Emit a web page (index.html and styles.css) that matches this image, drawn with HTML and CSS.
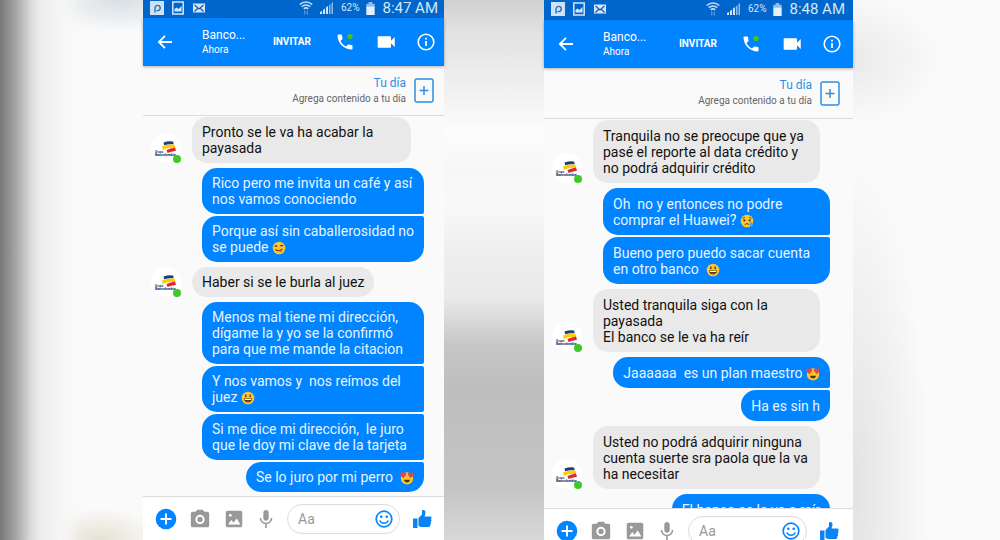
FILE: index.html
```
<!DOCTYPE html>
<html lang="es">
<head>
    <meta charset="utf-8">
    <meta name="viewport" content="width=device-width, initial-scale=1">
    <title>Conversación</title>
    <link rel="stylesheet" href="styles.css">
</head>
<body>

<!-- Shared icons -->
<svg class="sprite" aria-hidden="true">
    <symbol id="i-app" viewBox="0 0 14 14">
        <path fill="#cfe2f7" d="M0 0h14v14H0z"/>
        <path fill="none" stroke="#2f6fb5" stroke-width="1.4" d="M5 11.5V7a2.6 2.6 0 1 1 2.6 2.6H6.4"/>
    </symbol>
    <symbol id="i-shot" viewBox="0 0 14 14">
        <path fill="none" stroke="#d5e6f8" stroke-width="1.5" d="M1.8 1h10.4v12H1.8z"/>
        <path fill="#d5e6f8" d="M3.5 10.5V8l2-1.5 2 1.5 3-3v5.5z"/>
    </symbol>
    <symbol id="i-mail" viewBox="0 0 14 14">
        <path fill="#d5e6f8" d="M1 2.5h12v9H1z"/>
        <path fill="none" stroke="#0a5cb5" stroke-width="1.2" d="M2.5 4L7 8l4.5-4M2.5 10.5l3-3M11.5 10.5l-3-3"/>
    </symbol>
    <symbol id="i-wifi" viewBox="0 0 14 14">
        <path fill="none" stroke="#c4dcf5" stroke-width="1.5" d="M.8 3.6a9 9 0 0 1 12.4 0M2.8 5.8a6 6 0 0 1 8.4 0M4.8 7.9a3.2 3.2 0 0 1 4.4 0"/>
        <path fill="none" stroke="#6fa9e2" d="M5.8 9.5v4M8.2 9.5v4"/>
    </symbol>
    <symbol id="i-signal" viewBox="0 0 14 14">
        <path fill="#d5e6f8" d="M0 13v-2l2-1v3zM3 13V9l2-1.5V13zM6 13V6.5L8 5v8z"/>
        <path fill="#8fbbe8" d="M9 13V4.2l1.5-1V13zM11.500 13V2l1.5-1v12z"/>
    </symbol>
    <symbol id="i-battery" viewBox="0 0 9 14">
        <path fill="#8fbbe8" d="M2.5 0h4v2H9v4H0V2h2.5z"/>
        <path fill="#e3effb" d="M0 5h9v9H0z"/>
    </symbol>
    <symbol id="i-back" viewBox="0 0 16 16">
        <path fill="none" stroke="#fff" stroke-width="1.8" d="M15 8H2M8 1.800L1.800 8 8 14.200"/>
    </symbol>
    <symbol id="i-phone" viewBox="0 0 24 24">
        <path fill="#fff" d="M6.62 10.79c1.44 2.83 3.76 5.14 6.59 6.59l2.2-2.2c.27-.27.67-.36 1.02-.24 1.12.37 2.33.57 3.57.57.55 0 1 .45 1 1V20c0 .55-.45 1-1 1C10.61 21 3 13.39 3 4c0-.55.45-1 1-1h3.5c.55 0 1 .45 1 1 0 1.25.2 2.45.57 3.57.11.35.03.74-.25 1.02z"/>
        <circle cx="18" cy="5.500" r="3.200" fill="#42c716"/>
    </symbol>
    <symbol id="i-video" viewBox="0 0 24 24">
        <path fill="#fff" d="M18 10.5V6c0-.55-.45-1-1-1H3c-.55 0-1 .45-1 1v12c0 .55.45 1 1 1h14c.55 0 1-.45 1-1v-4.5l4.5 4.5V6z"/>
    </symbol>
    <symbol id="i-info" viewBox="0 0 18 18">
        <circle cx="9" cy="9" r="7.8" fill="none" stroke="#fff" stroke-width="1.6"/>
        <path stroke="#fff" stroke-width="1.8" d="M9 8v5M9 4.800v1.800"/>
    </symbol>
    <symbol id="i-plus" viewBox="0 0 22 22">
        <circle cx="11" cy="11" r="10.3" fill="#0084ff"/>
        <path stroke="#fff" stroke-width="1.900" d="M11 5.500v11M5.500 11h11"/>
    </symbol>
    <symbol id="i-camera" viewBox="0 0 24 24">
        <path fill="#999" d="M9 2L7.200 4H4c-1.100 0-2 .9-2 2v13c0 1.100.9 2 2 2h16c1.100 0 2-.9 2-2V6c0-1.100-.9-2-2-2h-3.200L15 2z"/>
        <circle cx="12" cy="12.500" r="4" fill="none" stroke="#fff" stroke-width="2.200"/>
    </symbol>
    <symbol id="i-image" viewBox="0 0 24 24">
        <path fill="#999" d="M21 19V5c0-1.100-.9-2-2-2H5c-1.100 0-2 .9-2 2v14c0 1.100.9 2 2 2h14c1.100 0 2-.9 2-2z"/>
        <path fill="#fff" d="M5.500 18l3.500-5 2.500 3 3.500-4.500 4 6.500z"/>
        <circle cx="8" cy="8" r="1.500" fill="#fff"/>
    </symbol>
    <symbol id="i-mic" viewBox="3 2 18 20">
        <path fill="#999" d="M12 14c1.660 0 3-1.340 3-3V5c0-1.660-1.340-3-3-3S9 3.340 9 5v6c0 1.660 1.340 3 3 3z"/>
        <path fill="none" stroke="#999" stroke-width="1.800" d="M5.800 11c0 3.500 2.900 6 6.200 6s6.200-2.500 6.200-6M12 17v5"/>
    </symbol>
    <symbol id="i-smile" viewBox="0 0 18 18">
        <circle cx="9" cy="9" r="7.800" fill="none" stroke="#0084ff" stroke-width="1.700"/>
        <circle cx="6.300" cy="6.800" r="1.300" fill="#0084ff"/>
        <circle cx="11.700" cy="6.800" r="1.300" fill="#0084ff"/>
        <path fill="none" stroke="#0084ff" stroke-width="1.500" d="M4.800 10.500c1.500 3.600 6.900 3.600 8.400 0"/>
    </symbol>
    <symbol id="i-like" viewBox="0 0 20 20">
        <path fill="#0a84f5" d="M1 9.500h4.500V19H2c-.6 0-1-.4-1-1zM6.500 9L10 5.500V2c0-1.500 3.500-1.500 3.500 1.500 0 1.600-.5 2.500-1 4H18c2 0 2 2.200.9 2.800.9.700.8 2-.2 2.600.7.800.5 2-.5 2.500.4 1.300-.3 2.600-1.900 2.600H10c-1.500 0-2.300-.5-3.500-1z"/>
    </symbol>
    <symbol id="i-story" viewBox="0 0 20 25">
        <rect x="1" y="1" width="18" height="23" rx="2" fill="none" stroke="#2f8de4" stroke-width="1.500"/>
        <path stroke="#2f8de4" stroke-width="1.500" d="M10 8v9M5.500 12.500h9"/>
    </symbol>
    <symbol id="i-bank" viewBox="0 0 30 30">
        <circle cx="15" cy="15" r="15" fill="#fff"/>
        <path fill="#1d3f7d" d="M12.500 9.500q5-1.800 9.500-1l.8 2.800q-5-.6-9.600 1z"/>
        <path fill="#fc0" d="M11 13.500q6-2.800 12.500-1.800l.8 3.200q-6.500-.8-12.500 2z"/>
        <path fill="#e3262b" d="M15.500 17q4-1.800 8.500-2.500l1 3.300q-4.500.7-8.500 2.300z"/>
        <text x="4" y="19.500" font-size="3" font-weight="700" fill="#2b4a75">Grupo</text>
        <text x="4" y="22.800" font-size="3.500" font-weight="900" fill="#1d3f7d">Bancolombia</text>
    </symbol>
    <symbol id="e-grin" viewBox="0 0 16 16">
        <circle cx="8" cy="8" r="7.200" fill="#fdc72f"/>
        <path fill="#5b3213" d="M4.800 4h1.500v3H4.800zM9.700 4h1.500v3H9.700zM3.200 8.500h9.600c-.5 6-9.100 6-9.600 0z"/>
        <path fill="#fff" d="M4 9h8l-.5 1.300h-7z"/>
        <path fill="#e8453c" d="M5.800 12.300q2.200-1.600 4.400 0-2.200 1.200-4.400 0z"/>
    </symbol>
    <symbol id="e-yum" viewBox="0 0 16 16">
        <circle cx="8" cy="8" r="7.200" fill="#fdc72f"/>
        <path fill="none" stroke="#5b3213" stroke-width="1.200" d="M3 6.500q1.500-2 3 0M9.500 6q1.500-2 3.200 0M4 9.500q3 3.500 8-.5"/>
        <path fill="#e8453c" d="M7.500 10.500l3.500-1c2 2.500-1.800 5-3.500 1z"/>
    </symbol>
    <symbol id="e-love" viewBox="0 0 16 16">
        <circle cx="8" cy="8.500" r="7" fill="#fdc72f"/>
        <path fill="#ee3f42" d="M3.800 8.200L.3 4.500C-.5 1.500 3 .8 3.800 2.500 5.500.5 8 2.500 6.800 4.700zM12.200 8.200L9.200 4.700C8 2.500 10.500.5 12.200 2.500 13 .8 16.500 1.500 15.700 4.500z"/>
        <path fill="#5b3213" d="M4.500 10h7c-.8 4-6.200 4-7 0z"/>
    </symbol>
    <symbol id="e-cry" viewBox="0 0 16 16">
        <circle cx="8" cy="8" r="7.200" fill="#fdc72f"/>
        <path fill="none" stroke="#5b3213" stroke-width="1.100" d="M3 5l2.500-1.200M10.500 3.800L13 5M5.500 12q2.500-2.200 5 0"/>
        <circle cx="5" cy="7.300" r="1.200" fill="#5b3213"/>
        <circle cx="11" cy="7.300" r="1.200" fill="#5b3213"/>
        <path fill="#45a9ea" d="M12.500 8.500c3 3 3 5.500.5 5.700-2.500-.2-2.500-2.700-.5-5.700z"/>
    </symbol>
</svg>

<main class="stage">
    <section class="phone">
        <div class="status">
            <svg class="status-icon"><use href="#i-app"/></svg>
            <svg class="status-icon"><use href="#i-shot"/></svg>
            <svg class="status-icon"><use href="#i-mail"/></svg>
            <svg class="status-icon wifi"><use href="#i-wifi"/></svg>
            <svg class="status-icon"><use href="#i-signal"/></svg>
            <span class="charge">62%</span>
            <svg class="battery"><use href="#i-battery"/></svg>
            <span class="clock">8:47 AM</span>
        </div>
        <header class="topbar">
            <button class="back" aria-label="Volver"><svg><use href="#i-back"/></svg></button>
            <div class="contact">
                <div class="name">Banco...</div>
                <div class="seen">Ahora</div>
            </div>
            <button class="invite">INVITAR</button>
            <button class="call" aria-label="Llamar"><svg><use href="#i-phone"/></svg></button>
            <button class="call" aria-label="Videollamada"><svg><use href="#i-video"/></svg></button>
            <button class="info" aria-label="Información"><svg><use href="#i-info"/></svg></button>
        </header>
        <div class="story">
            <div class="story-text">
                <div class="story-title">Tu día</div>
                <div>Agrega contenido a tu día</div>
            </div>
            <button class="story-add" aria-label="Agregar a tu día"><svg><use href="#i-story"/></svg></button>
        </div>
        <div class="chat">
            <div class="received">
                <div class="avatar"><svg><use href="#i-bank"/></svg></div>
                <p class="bubble">Pronto se le va ha acabar la payasada</p>
            </div>
            <div class="sent">
                <p class="bubble">Rico pero me invita un café y así nos vamos conociendo</p>
                <p class="bubble">Porque así sin caballerosidad no se puede <svg class="emoji"><use href="#e-yum"/></svg></p>
            </div>
            <div class="received">
                <div class="avatar"><svg><use href="#i-bank"/></svg></div>
                <p class="bubble">Haber si se le burla al juez</p>
            </div>
            <div class="sent">
                <p class="bubble">Menos mal tiene mi dirección, dígame la y yo se la confirmó para que me mande la citacion</p>
                <p class="bubble">Y nos vamos y &nbsp;nos reímos del juez <svg class="emoji"><use href="#e-grin"/></svg></p>
                <p class="bubble">Si me dice mi dirección, &nbsp;le juro que le doy mi clave de la tarjeta</p>
                <p class="bubble">Se lo juro por mi perro &nbsp;<svg class="emoji"><use href="#e-love"/></svg></p>
            </div>
        </div>
        <form class="composer">
            <button type="button" class="add" aria-label="Más"><svg><use href="#i-plus"/></svg></button>
            <button type="button" class="tool" aria-label="Cámara"><svg><use href="#i-camera"/></svg></button>
            <button type="button" class="tool" aria-label="Galería"><svg><use href="#i-image"/></svg></button>
            <button type="button" class="mic" aria-label="Micrófono"><svg><use href="#i-mic"/></svg></button>
            <div class="field">
                <input type="text" placeholder="Aa" aria-label="Mensaje">
                <button type="button" class="smile" aria-label="Emoji"><svg><use href="#i-smile"/></svg></button>
            </div>
            <button type="button" class="like" aria-label="Me gusta"><svg><use href="#i-like"/></svg></button>
        </form>
    </section>

    <section class="phone large">
        <div class="status">
            <svg class="status-icon"><use href="#i-app"/></svg>
            <svg class="status-icon"><use href="#i-shot"/></svg>
            <svg class="status-icon"><use href="#i-mail"/></svg>
            <svg class="status-icon wifi"><use href="#i-wifi"/></svg>
            <svg class="status-icon"><use href="#i-signal"/></svg>
            <span class="charge">62%</span>
            <svg class="battery"><use href="#i-battery"/></svg>
            <span class="clock">8:48 AM</span>
        </div>
        <header class="topbar">
            <button class="back" aria-label="Volver"><svg><use href="#i-back"/></svg></button>
            <div class="contact">
                <div class="name">Banco...</div>
                <div class="seen">Ahora</div>
            </div>
            <button class="invite">INVITAR</button>
            <button class="call" aria-label="Llamar"><svg><use href="#i-phone"/></svg></button>
            <button class="call" aria-label="Videollamada"><svg><use href="#i-video"/></svg></button>
            <button class="info" aria-label="Información"><svg><use href="#i-info"/></svg></button>
        </header>
        <div class="story">
            <div class="story-text">
                <div class="story-title">Tu día</div>
                <div>Agrega contenido a tu día</div>
            </div>
            <button class="story-add" aria-label="Agregar a tu día"><svg><use href="#i-story"/></svg></button>
        </div>
        <div class="chat">
            <div class="received">
                <div class="avatar"><svg><use href="#i-bank"/></svg></div>
                <p class="bubble">Tranquila no se preocupe que ya pasé el reporte al data crédito y no podrá adquirir crédito</p>
            </div>
            <div class="sent">
                <p class="bubble">Oh &nbsp;no y entonces no podre comprar el Huawei? <svg class="emoji"><use href="#e-cry"/></svg></p>
                <p class="bubble">Bueno pero puedo sacar cuenta en otro banco &nbsp;<svg class="emoji"><use href="#e-grin"/></svg></p>
            </div>
            <div class="received">
                <div class="avatar"><svg><use href="#i-bank"/></svg></div>
                <p class="bubble">Usted tranquila siga con la payasada<br>El banco se le va ha reír</p>
            </div>
            <div class="sent">
                <p class="bubble">Jaaaaaa &nbsp;es un plan maestro <svg class="emoji"><use href="#e-love"/></svg></p>
                <p class="bubble">Ha es sin h</p>
            </div>
            <div class="received">
                <div class="avatar"><svg><use href="#i-bank"/></svg></div>
                <p class="bubble">Usted no podrá adquirir ninguna cuenta suerte sra paola que la va ha necesitar</p>
            </div>
            <div class="sent">
                <p class="bubble">El banco se le va a reír</p>
            </div>
        </div>
        <form class="composer">
            <button type="button" class="add" aria-label="Más"><svg><use href="#i-plus"/></svg></button>
            <button type="button" class="tool" aria-label="Cámara"><svg><use href="#i-camera"/></svg></button>
            <button type="button" class="tool" aria-label="Galería"><svg><use href="#i-image"/></svg></button>
            <button type="button" class="mic" aria-label="Micrófono"><svg><use href="#i-mic"/></svg></button>
            <div class="field">
                <input type="text" placeholder="Aa" aria-label="Mensaje">
                <button type="button" class="smile" aria-label="Emoji"><svg><use href="#i-smile"/></svg></button>
            </div>
            <button type="button" class="like" aria-label="Me gusta"><svg><use href="#i-like"/></svg></button>
        </form>
    </section>
</main>
</body>
</html>
```
FILE: styles.css
```
:root {
    --blue: #0084ff;
    --status-blue: #0066cc;
    --grey-bubble: #e9e9e9;
    --line: #dcdcdc;
}

* {
    box-sizing: border-box;
}

body {
    margin: 0;
    height: 100vh;
    overflow: hidden;
    font-family: Roboto, "Liberation Sans", sans-serif;
    font-size: 14px;
    line-height: 16px;
}

button {
    flex: none;
    padding: 0;
    border: 0;
    background: none;
    font: inherit;
    color: inherit;
    cursor: pointer;
}

svg {
    display: block;
    width: 100%;
    height: 100%;
}

.sprite {
    display: none;
}

/* Blurred backdrop with the two phones in front */
.stage {
    display: grid;
    grid-template-columns: minmax(0, 301fr) minmax(0, 309fr);
    column-gap: 10vw;
    align-items: start;
    height: 100vh;
    padding: 0 14.7vw 0 14.3vw;
    background:
        linear-gradient(90deg, #777 0, #949494 1%, #b4b4b4 2%, #d8d8d8 3%, #ececec 4%, #f6f6f6 6%, transparent 8%) no-repeat,
        linear-gradient(#d0d0d0 0, #e2e2e2 6%, #eee 15%, #fcfcfc 24%, #f7f7f7 32%, #f9f9f9 38%, #eee 47%, #eaeaea 55%, #c6c6c6 64%, #bebebe 72%, #c4c4c4 90%, #d8d8d8 100%) 49.3% 0 / 12% 100% no-repeat,
        radial-gradient(9% 12% at 85% 11%, #e9e9e9, transparent) no-repeat,
        radial-gradient(8% 60% at 85% 90%, #e2e2e2, transparent) no-repeat,
        radial-gradient(8% 6% at 12% 0, #d8dfe4, transparent) no-repeat,
        radial-gradient(6% 6% at 10% 100%, #e5e1d3, transparent) no-repeat,
        #fafafa;
}

.phone {
    display: flex;
    flex-direction: column;
    height: 100vh;
    background: #fafafa;
}

/* Status bar */
.status {
    display: flex;
    align-items: center;
    gap: 7px;
    height: 18px;
    padding: 0 6px 2px 7px;
    background: var(--status-blue);
    color: #d5e6f8;
}

.status-icon {
    flex: none;
    width: 14px;
    height: 14px;
}

.wifi {
    margin-left: auto;
}

.battery {
    flex: none;
    width: 9px;
    height: 13px;
}

.charge {
    font-size: 10px;
}

.clock {
    font-size: 15px;
}

/* Contact bar */
.topbar {
    display: flex;
    align-items: center;
    height: 48px;
    padding: 0 9px 0 14px;
    background: var(--blue);
    color: #fff;
    box-shadow: 0 1px 3px rgba(0, 0, 0, 0.3);
}

.back {
    width: 16px;
    height: 16px;
}

.contact {
    flex: 1;
    margin-left: 29px;
}

.name {
    font-size: 12px;
}

.seen {
    font-size: 10px;
    line-height: 14px;
}

.invite {
    margin-right: 24px;
    font-size: 10px;
    font-weight: 700;
}

.call {
    width: 20px;
    height: 20px;
    margin-right: 21px;
}

.info {
    width: 18px;
    height: 18px;
}

/* Story row */
.story {
    display: flex;
    align-items: center;
    justify-content: flex-end;
    gap: 8px;
    height: 50px;
    padding: 0 10px;
    border-bottom: 1px solid var(--line);
    color: #666;
    font-size: 10px;
    text-align: right;
}

.story-title {
    color: #2f8de4;
    font-size: 12px;
}

.story-add {
    width: 20px;
    height: 25px;
}

/* Messages */
.chat {
    flex: 1;
    display: flex;
    flex-direction: column;
    gap: 5px;
    min-height: 0;
    padding: 1px 20px 0 8px;
    overflow: hidden;
}

.received {
    flex: none;
    display: flex;
    align-items: flex-end;
    gap: 11px;
}

.sent {
    flex: none;
    display: flex;
    flex-direction: column;
    align-items: flex-end;
    gap: 2px;
}

.bubble {
    max-width: 222px;
    margin: 0;
    padding: 7px 10px;
    border-radius: 15px;
}

.received .bubble {
    max-width: 219px;
    background: var(--grey-bubble);
    color: #111;
}

.sent .bubble {
    background: var(--blue);
    color: #e8f3ff;
}

.sent .bubble:not(:last-child) {
    border-bottom-right-radius: 2px;
}

.sent .bubble:not(:first-child) {
    border-top-right-radius: 2px;
}

.avatar {
    position: relative;
    flex: none;
    width: 30px;
    height: 30px;
}

.avatar::after {
    content: '';
    position: absolute;
    right: 0;
    bottom: 0;
    width: 8px;
    height: 8px;
    border-radius: 50%;
    background: #42c728;
}

.emoji {
    display: inline-block;
    width: 14px;
    height: 14px;
    vertical-align: -3px;
}

/* Composer */
.composer {
    flex: none;
    display: flex;
    align-items: center;
    gap: 12px;
    height: 44px;
    padding: 0 12px;
    border-top: 1px solid var(--line);
    background: #fff;
}

.add,
.tool {
    width: 22px;
    height: 22px;
}

.mic {
    width: 18px;
    height: 18px;
}

.field {
    flex: 1;
    display: flex;
    align-items: center;
    min-width: 0;
    height: 30px;
    padding: 0 6px 0 10px;
    border: 1px solid var(--line);
    border-radius: 15px;
}

.field input {
    flex: 1;
    width: 100%;
    min-width: 0;
    padding: 0;
    border: 0;
    outline: 0;
    background: none;
    font: inherit;
}

.field input::placeholder {
    color: #999;
}

.smile {
    width: 18px;
    height: 18px;
}

.like {
    width: 20px;
    height: 20px;
}

/* Second phone is slightly bigger and runs past the bottom edge */
.large {
    height: calc(100vh + 12px);
}

.large .status {
    height: 20px;
    padding-right: 8px;
}

.large .topbar {
    padding-right: 12px;
}

.large .story {
    height: 51px;
    padding-right: 13px;
}

.large .chat {
    padding-right: 23px;
}

.large .bubble {
    max-width: 227px;
    padding: 8px 10px 7px;
}

.large .composer {
    padding-right: 14px;
}
```
